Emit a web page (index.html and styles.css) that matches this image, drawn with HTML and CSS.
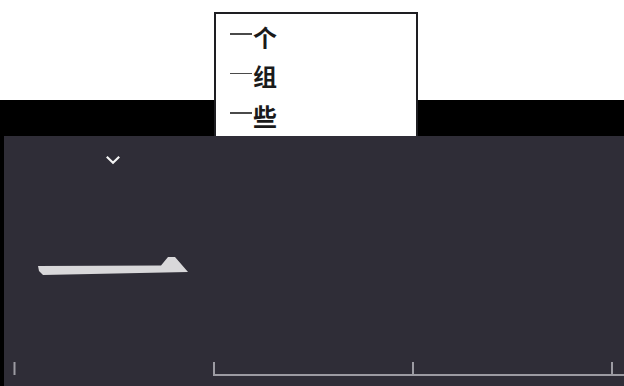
FILE: index.html
```html
<!DOCTYPE html>
<html>
<head>
<meta charset="utf-8">
<link rel="stylesheet" href="styles.css">
</head>
<body>
<div class="page">
  <div class="top"></div>
  <div class="band"></div>
  <div class="frame">
    <div class="panel">
      <svg class="chevron" width="16" height="10" viewBox="0 0 16 10">
        <polyline points="1.8,1.8 8,7.8 14.2,1.8" fill="none" stroke="#f4f4f4" stroke-width="2.2"/>
      </svg>
      <svg class="slider" width="156" height="22" viewBox="0 0 156 22">
        <polygon points="2,12 125,11.5 132,3 139,3 152,18 7,21 3,17" fill="#d9d8da"/>
      </svg>
      <svg class="ruler" width="620" height="18" viewBox="0 0 620 18">
        <g stroke="#9c9ba2" stroke-width="2" fill="none">
          <line x1="10.5" y1="2" x2="10.5" y2="15"/>
          <polyline points="210,2 210,15 620,15"/>
          <line x1="409" y1="2" x2="409" y2="15"/>
          <line x1="608" y1="2" x2="608" y2="15"/>
        </g>
      </svg>
    </div>
  </div>
  <div class="popup">
    <div class="item"><span class="dash"></span><span class="ch">个</span></div>
    <div class="item"><span class="dash"></span><span class="ch">组</span></div>
    <div class="item"><span class="dash"></span><span class="ch">些</span></div>
  </div>
</div>
</body>
</html>
```
FILE: styles.css
```css
html, body {
  margin: 0;
  padding: 0;
  background: #ffffff;
}
.page {
  position: relative;
  width: 624px;
  height: 386px;
  overflow: hidden;
  display: flex;
  flex-direction: column;
}
.top {
  height: 100px;
  background: #ffffff;
}
.band {
  height: 36px;
  background: #000000;
}
.frame {
  flex: 1;
  background: #000000;
  padding-left: 4px;
  display: flex;
}
.panel {
  flex: 1;
  background: #2f2d37;
  display: flex;
  flex-direction: column;
  align-items: flex-start;
}
.chevron {
  display: block;
  margin: 19px 0 0 101px;
}
.slider {
  display: block;
  margin: 89px 0 0 32px;
}
.ruler {
  display: block;
  margin: auto 0 8px 0;
}
.popup {
  position: absolute;
  left: 214px;
  top: 12px;
  width: 204px;
  height: 124px;
  box-sizing: border-box;
  background: #ffffff;
  border: 2px solid #1e1e22;
  border-bottom: none;
  padding: 3px 0 0 14px;
  font-family: "Noto Sans CJK SC", "Noto Sans", sans-serif;
}
.item {
  height: 39.5px;
  display: flex;
  align-items: center;
  white-space: nowrap;
}
.dash {
  display: block;
  width: 22px;
  height: 1.5px;
  background: #4a4a4a;
  margin-top: -6px;
}
.ch {
  font-size: 24px;
  line-height: 28px;
  font-weight: 700;
  color: #1a1a1a;
  margin-left: 1px;
}
```
